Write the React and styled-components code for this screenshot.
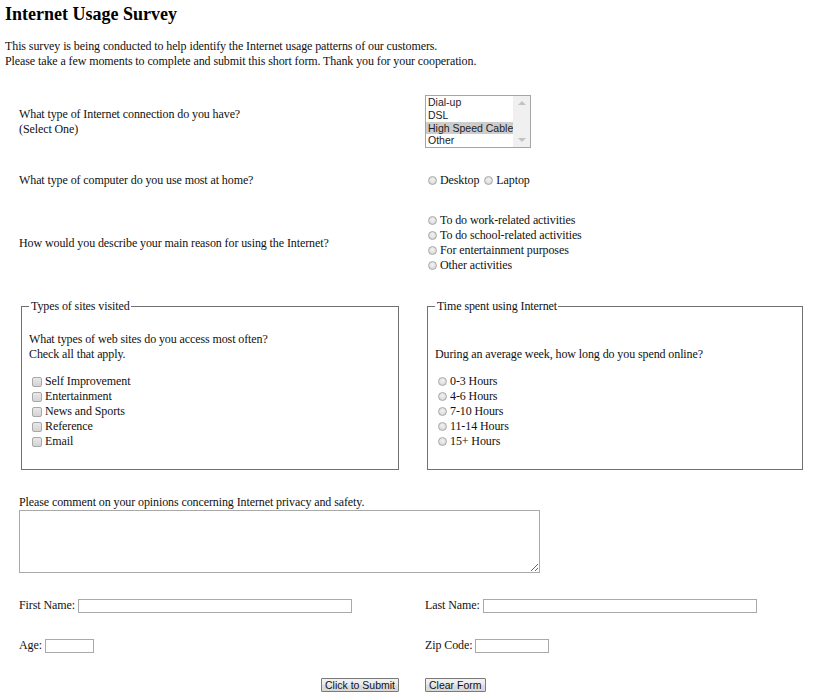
import React from 'react';
import styled, {createGlobalStyle} from 'styled-components';

const GlobalStyle = createGlobalStyle`
  body {
    margin: 0;
    background: #fff;
    color: #111;
    font-family: "Liberation Serif", "Times New Roman", serif;
    font-size: 12px;
    line-height: 15px;
    letter-spacing: -0.1px;
  }
`;

const Page = styled.div`
  padding: 4px 5px 0;
  width: 830px;
  box-sizing: border-box;
`;

const Title = styled.h1`
  margin: 0;
  font-size: 18px;
  line-height: 21px;
  font-weight: bold;
  letter-spacing: 0;
  color: #000;
`;

const Intro = styled.p`
  margin: 14px 0 0;
`;

const Form = styled.form`
  display: flex;
  flex-direction: column;
  padding-left: 14px;
`;

const Row = styled.div`
  display: grid;
  grid-template-columns: 406px 1fr;
  align-items: center;
  margin-top: ${(props) => props.mt}px;
`;

const Cell = styled.div`
  display: flex;
  flex-direction: column;
  align-items: flex-start;
`;

const Inline = styled.div`
  display: flex;
  align-items: center;
  justify-content: ${(props) => props.justify || 'flex-start'};
  padding-right: ${(props) => props.pr || 0}px;
`;

const ListBox = styled.div`
  display: flex;
  width: 106px;
  height: 53px;
  box-sizing: border-box;
  border: 1px solid #a5a5a5;
  background: #fff;
  font-family: "Liberation Sans", Arial, sans-serif;
  font-size: 10.5px;
  letter-spacing: 0;
`;

const Options = styled.div`
  flex: 1;
  min-width: 0;
  display: flex;
  flex-direction: column;
`;

const Option = styled.div`
  height: 12.75px;
  line-height: 12.75px;
  padding-left: 2px;
  white-space: nowrap;
  overflow: hidden;
  color: #222;
  background: ${(props) => (props.selected ? '#cdcdcd' : 'transparent')};
`;

const ScrollBar = styled.div`
  width: 17px;
  flex-shrink: 0;
  background: #f0f0f0;
  display: flex;
  flex-direction: column;
  justify-content: space-between;
  align-items: center;
  padding: 5px 0;
  box-sizing: border-box;
`;

const Arrow = styled.div`
  width: 0;
  height: 0;
  border-left: 4px solid transparent;
  border-right: 4px solid transparent;
  border-${(props) => (props.up ? 'bottom' : 'top')}: 4px solid #c2c2c2;
`;

const Choice = styled.label`
  display: flex;
  align-items: center;
  height: 15px;
  margin-right: ${(props) => props.mr || 0}px;
`;

const Radio = styled.input.attrs({type: 'radio'})`
  appearance: none;
  width: 9px;
  height: 9px;
  margin: 0 3px 0 3px;
  border-radius: 50%;
  border: 1px solid #a8a8a8;
  background: radial-gradient(circle at 50% 40%, #f4f4f4 0%, #dadada 70%, #cfcfcf 100%);
  box-sizing: border-box;
`;

const Checkbox = styled.input.attrs({type: 'checkbox'})`
  appearance: none;
  width: 10px;
  height: 10px;
  margin: 0 3px 0 3px;
  border-radius: 2px;
  border: 1px solid #a8a8a8;
  background: linear-gradient(#e8e8e8, #d4d4d4);
  box-sizing: border-box;
`;

const FieldRow = styled.div`
  display: grid;
  grid-template-columns: 406px 1fr;
  align-items: stretch;
  margin-top: 26px;
`;

const Fieldset = styled.fieldset`
  width: ${(props) => props.w}px;
  margin: 0 0 0 2px;
  padding: 18px 7px 20px;
  border: 1px solid #707070;
  box-sizing: border-box;
  min-width: 0;
`;

const Legend = styled.legend`
  padding: 0 1px 0 2px;
  margin: 0;
  line-height: 15px;
`;

const Question = styled.p`
  margin: ${(props) => (props.spaced ? '15px' : '0')} 0 12px;
`;

const Comment = styled.div`
  display: flex;
  flex-direction: column;
  margin-top: 25px;
`;

const TextArea = styled.textarea`
  width: 521px;
  height: 63px;
  margin-top: 0;
  box-sizing: border-box;
  border: 1px solid #a9a9a9;
  font-family: "Liberation Mono", monospace;
  font-size: 12px;
`;

const TextInput = styled.input.attrs({type: 'text'})`
  width: ${(props) => props.w}px;
  height: 14px;
  margin-left: 3px;
  padding: 0 2px;
  box-sizing: border-box;
  border: 1px solid #a9a9a9;
  font-family: "Liberation Sans", Arial, sans-serif;
  font-size: 11px;
`;

const Button = styled.button`
  height: 14px;
  padding: 0 3px;
  border: 1px solid #7a7a7a;
  border-radius: 1px;
  background: linear-gradient(#f3f3f3, #e9e9e9 50%, #dedede 50%, #d8d8d8);
  font-family: "Liberation Sans", Arial, sans-serif;
  font-size: 10.5px;
  line-height: 12px;
  letter-spacing: 0;
  color: #111;
`;

const sites = ['Self Improvement', 'Entertainment', 'News and Sports', 'Reference', 'Email'];
const hours = ['0-3 Hours', '4-6 Hours', '7-10 Hours', '11-14 Hours', '15+ Hours'];
const reasons = [
    'To do work-related activities',
    'To do school-related activities',
    'For entertainment purposes',
    'Other activities',
];

const App = () => {
    return (
        <Page>
            <GlobalStyle/>
            <Title>Internet Usage Survey</Title>
            <Intro>
                This survey is being conducted to help identify the Internet usage patterns of our customers.<br/>
                Please take a few moments to complete and submit this short form. Thank you for your cooperation.
            </Intro>
            <Form onSubmit={(e) => e.preventDefault()}>
                <Row mt={26}>
                    <Cell>
                        <span>What type of Internet connection do you have?</span>
                        <span>(Select One)</span>
                    </Cell>
                    <Cell>
                        <ListBox>
                            <Options>
                                <Option>Dial-up</Option>
                                <Option>DSL</Option>
                                <Option selected>High Speed Cable</Option>
                                <Option>Other</Option>
                            </Options>
                            <ScrollBar>
                                <Arrow up/>
                                <Arrow/>
                            </ScrollBar>
                        </ListBox>
                    </Cell>
                </Row>
                <Row mt={25}>
                    <Cell>What type of computer do you use most at home?</Cell>
                    <Inline>
                        <Choice mr={2}><Radio name="computer"/>Desktop</Choice>
                        <Choice><Radio name="computer"/>Laptop</Choice>
                    </Inline>
                </Row>
                <Row mt={25}>
                    <Cell>How would you describe your main reason for using the Internet?</Cell>
                    <Cell>
                        {reasons.map((r) => (
                            <Choice key={r}><Radio name="reason"/>{r}</Choice>
                        ))}
                    </Cell>
                </Row>
                <FieldRow>
                    <Fieldset w={378}>
                        <Legend>Types of sites visited</Legend>
                        <Question>What types of web sites do you access most often?<br/>Check all that apply.</Question>
                        {sites.map((s) => (
                            <Choice key={s}><Checkbox/>{s}</Choice>
                        ))}
                    </Fieldset>
                    <Fieldset w={376}>
                        <Legend>Time spent using Internet</Legend>
                        <Question spaced>During an average week, how long do you spend online?</Question>
                        {hours.map((h) => (
                            <Choice key={h}><Radio name="hours"/>{h}</Choice>
                        ))}
                    </Fieldset>
                </FieldRow>
                <Comment>
                    <span>Please comment on your opinions concerning Internet privacy and safety.</span>
                    <TextArea/>
                </Comment>
                <Row mt={25}>
                    <Inline>First Name:<TextInput w={274}/></Inline>
                    <Inline>Last Name:<TextInput w={274}/></Inline>
                </Row>
                <Row mt={25}>
                    <Inline>Age:<TextInput w={49}/></Inline>
                    <Inline>Zip Code:<TextInput w={74}/></Inline>
                </Row>
                <Row mt={25}>
                    <Inline justify="flex-end" pr={26}><Button type="submit">Click to Submit</Button></Inline>
                    <Inline><Button type="reset">Clear Form</Button></Inline>
                </Row>
            </Form>
        </Page>
    );
};

export default App;
